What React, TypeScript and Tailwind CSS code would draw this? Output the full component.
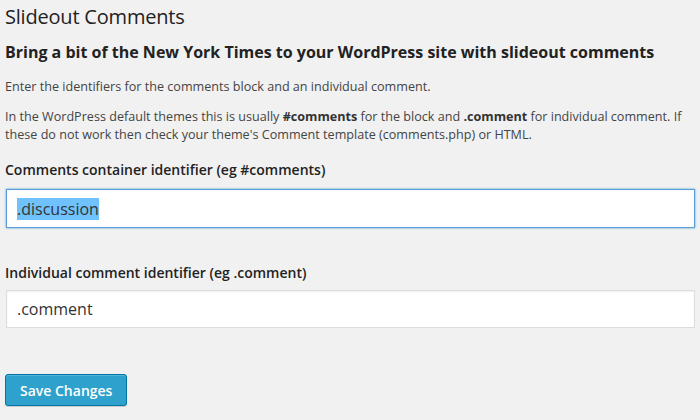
import React from "react";

export default function App() {
  return (
    <div className="w-[700px] h-[420px] bg-[#f1f1f1] text-[#444] font-['Open_Sans',sans-serif] overflow-hidden">
      <div className="pl-[5px] pr-[5px]">
        <h2 className="text-[20px] leading-[28px] pt-[3px] text-[#222] font-normal tracking-[-0.2px]">Slideout Comments</h2>
        <h3 className="mt-[11px] text-[16px] leading-[20px] font-bold text-[#222]">
          Bring a bit of the New York Times to your WordPress site with slideout comments
        </h3>
        <p className="mt-[16px] text-[12.6px] leading-[18px]">
          Enter the identifiers for the comments block and an individual comment.
        </p>
        <p className="mt-[12px] text-[12.6px] leading-[18px]">
          In the WordPress default themes this is usually <strong className="font-bold text-[#333]">#comments</strong> for the block and{" "}
          <strong className="font-bold text-[#333]">.comment</strong> for individual comment. If these do not work then check your theme's Comment
          template (comments.php) or HTML.
        </p>
        <label className="block mt-[16px] text-[14px] leading-[20px] font-semibold text-[#222]">
          Comments container identifier (eg #comments)
        </label>
        <div className="mt-[9px] ml-[1px] h-[39px] bg-white border border-[#5b9dd9] shadow-[0_0_2px_rgba(30,140,190,0.8)] flex items-center pl-[10px] text-[16px] text-[#333]">
          <span className="bg-[#6fc2fc] leading-[22px]">.discussion</span>
        </div>
        <label className="block mt-[35px] text-[14px] leading-[20px] font-semibold text-[#222]">
          Individual comment identifier (eg .comment)
        </label>
        <div className="mt-[7px] ml-[1px] h-[38px] bg-white border border-[#ddd] shadow-[inset_0_1px_2px_rgba(0,0,0,0.07)] flex items-center pl-[10px] text-[16px] text-[#333]">
          <span className="leading-[22px]">.comment</span>
        </div>
        <div className="mt-[46px]">
          <button className="h-[32px] px-[14px] rounded-[3px] bg-[#2ea2cc] border border-[#0074a2] text-white text-[14px] font-semibold shadow-[inset_0_1px_0_rgba(120,200,230,0.5),0_1px_0_rgba(0,0,0,0.15)]">
            Save Changes
          </button>
        </div>
      </div>
    </div>
  );
}
